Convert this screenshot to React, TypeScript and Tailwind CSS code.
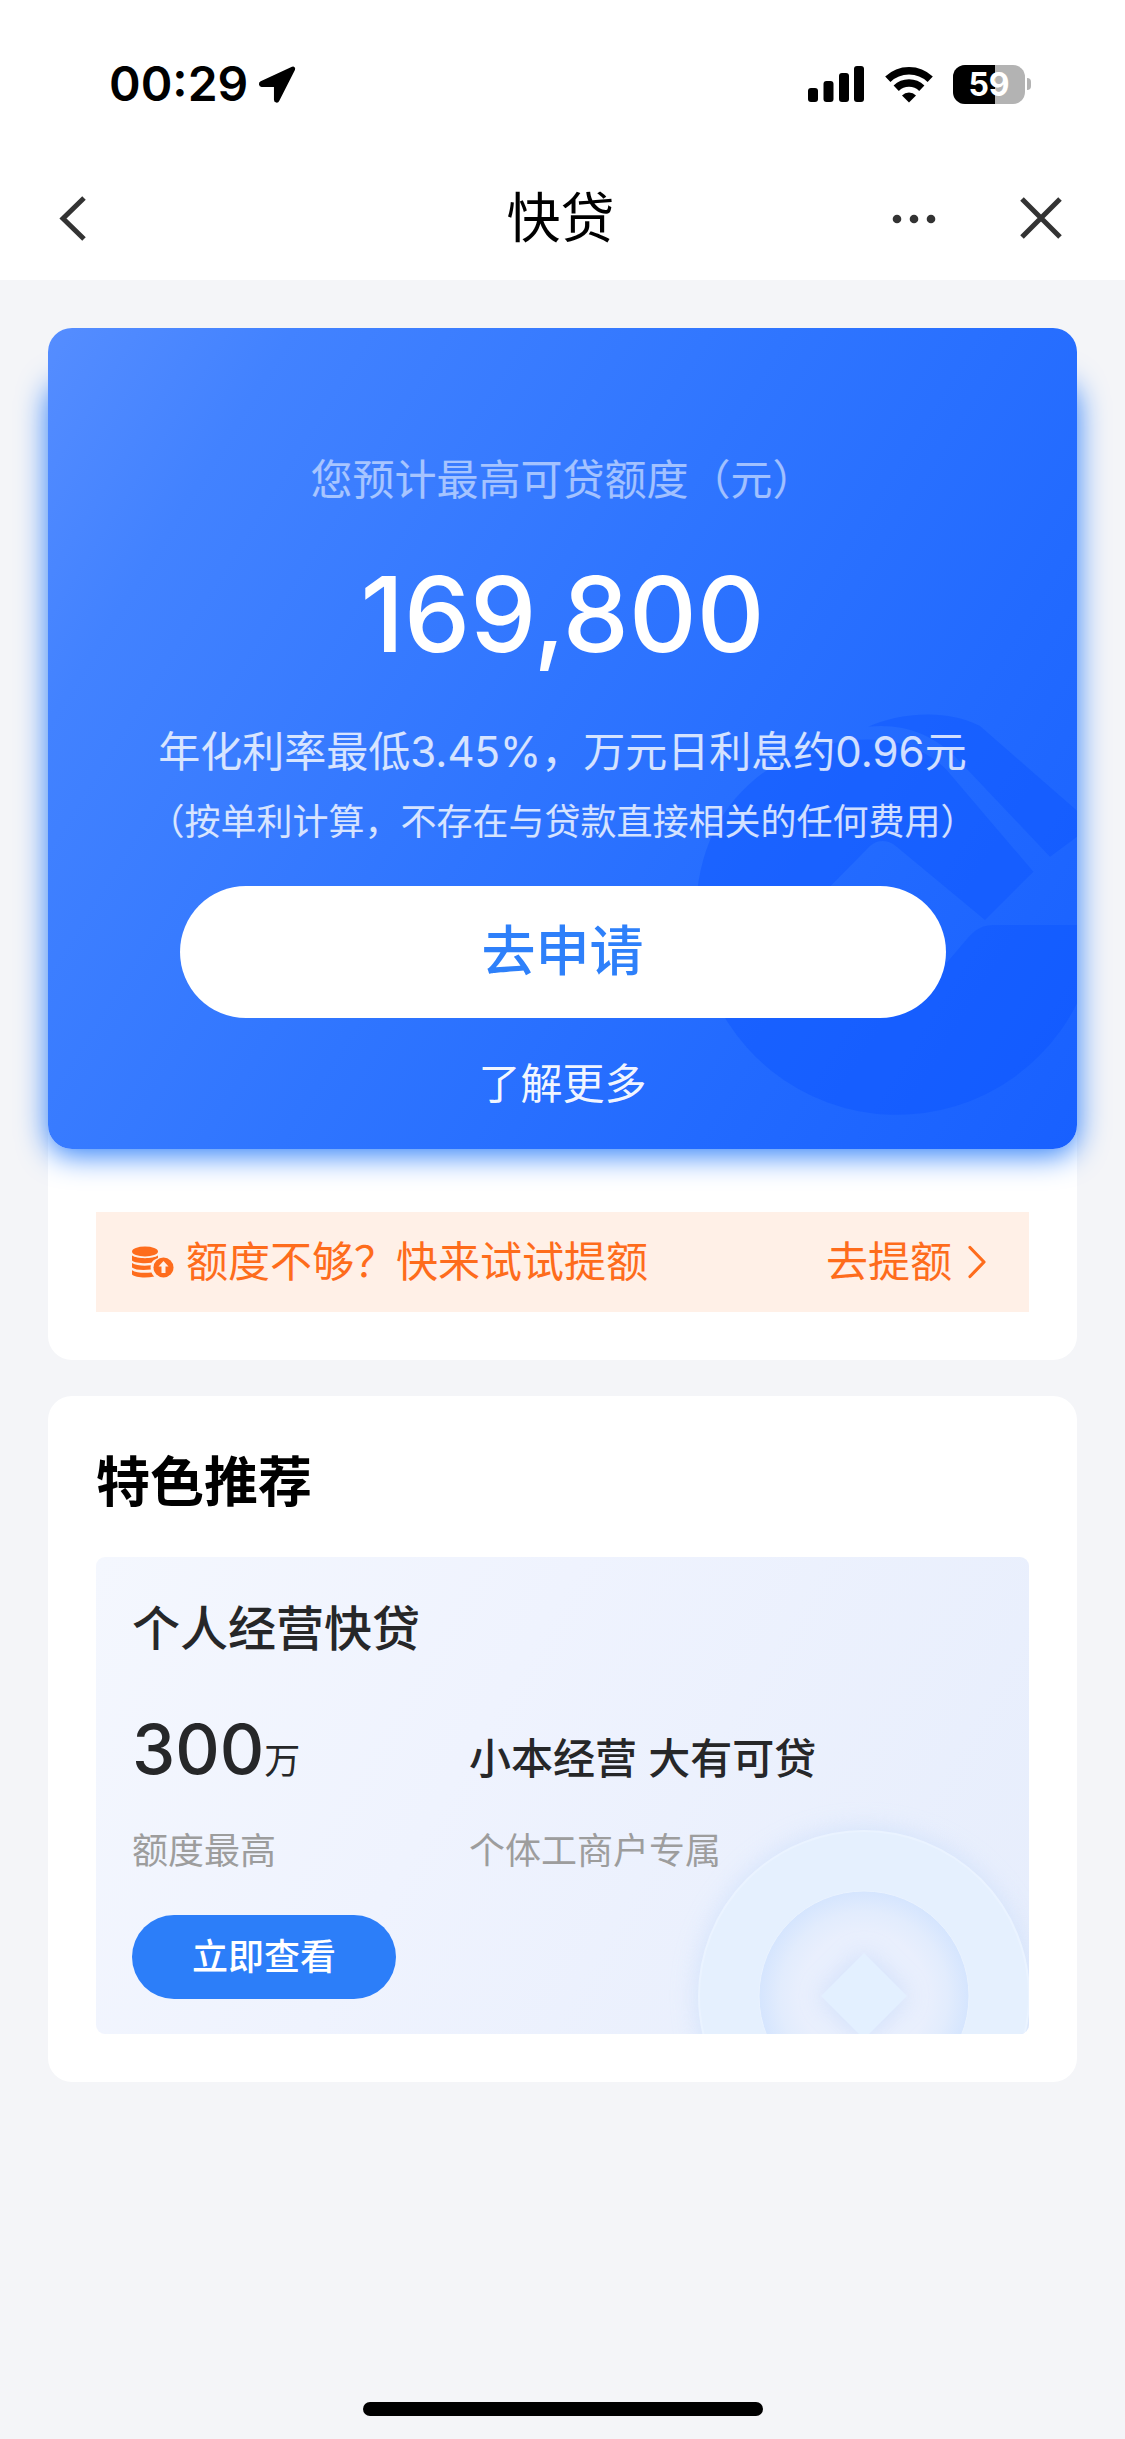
import type { ReactNode } from "react";

function LocationArrow() {
  return (
    <svg viewBox="0 0 38 38" className="h-[38px] w-[38px]" aria-hidden="true">
      <path
        d="M34.500 3 3.200 17.400c-1.600.8-1.200 3.400.4 3.400h13.600v14c0 1.800 2.200 2.200 3 .4L35.800 4.400c.4-1-.3-1.800-1.300-1.400z"
        fill="#000"
        stroke="#000"
        strokeWidth="2.500"
        strokeLinejoin="round"
      />
    </svg>
  );
}

function SignalBars() {
  return (
    <svg viewBox="0 0 57 38" className="h-[38px] w-[57px]" aria-hidden="true">
      <rect x="0" y="23" width="10" height="14" rx="3" />
      <rect x="15.500" y="16" width="10" height="21" rx="3" />
      <rect x="31" y="8" width="10" height="29" rx="3" />
      <rect x="46" y="1" width="10" height="36" rx="3" />
    </svg>
  );
}

function WifiIcon() {
  return (
    <svg viewBox="0 0 48 38" className="h-[38px] w-12" aria-hidden="true">
      <g fill="none" stroke="#000" strokeWidth="7.500">
        <path d="M2.800 14.300a30.500 30.500 0 0 1 42.400 0" />
        <path d="M11.200 23.200a18.400 18.400 0 0 1 25.600 0" />
      </g>
      <path d="M24 37.500l-7-7.100a10 10 0 0 1 14 0z" />
    </svg>
  );
}

function Battery({ level }: { level: number }) {
  return (
    <div className="flex items-center gap-[2px]">
      <div className="relative flex h-[39px] w-[72px] items-center justify-center overflow-hidden rounded-[12px] bg-[#b3b3b3]">
        <div className="absolute inset-y-0 left-0 bg-black" style={{ width: `${level}%` }} />
        <span className="relative text-[32px] leading-[39px] font-bold text-white">{level}</span>
      </div>
      <div className="h-3 w-1 rounded-r-full bg-[#b3b3b3]" />
    </div>
  );
}

function StatusBar() {
  return (
    <div className="flex items-center justify-between pt-[54px] pr-[94px] pl-[109px]">
      <div className="flex items-center gap-[10px]">
        <span className="text-[48px] leading-[60px] font-semibold text-black">00:29</span>
        <LocationArrow />
      </div>
      <div className="flex items-center gap-5">
        <SignalBars />
        <WifiIcon />
        <Battery level={59} />
      </div>
    </div>
  );
}

function NavBar() {
  return (
    <nav className="grid h-[126px] grid-cols-[1fr_auto_1fr] items-center pt-1 pr-[62px] pl-[58px]">
      <button type="button" aria-label="返回" className="justify-self-start">
        <svg viewBox="0 0 30 48" className="h-12 w-[30px]" aria-hidden="true">
          <path d="M26 3 5 23.500 26 44" fill="none" stroke="#333" strokeWidth="5" />
        </svg>
      </button>
      <h1 className="text-[54px] leading-[72px] text-black">快贷</h1>
      <div className="flex items-center gap-[82px] justify-self-end">
        <button type="button" aria-label="更多">
          <svg viewBox="0 0 46 12" className="h-3 w-[46px]" fill="#333" aria-hidden="true">
            <circle cx="6" cy="6" r="4.300" />
            <circle cx="23" cy="6" r="4.300" />
            <circle cx="40" cy="6" r="4.300" />
          </svg>
        </button>
        <button type="button" aria-label="关闭">
          <svg viewBox="0 0 44 44" className="h-11 w-11" aria-hidden="true">
            <path d="M3 2 41 40M41 2 3 40" fill="none" stroke="#333" strokeWidth="5" />
          </svg>
        </button>
      </div>
    </nav>
  );
}

// Large bank emblem in the lower right corner of the quota card
function Emblem() {
  return (
    <svg
      viewBox="0 0 1251 1377"
      className="absolute right-0 bottom-0 h-[459px] w-[417px]"
      fill="#0a52ff"
      fillOpacity="0.4"
      aria-hidden="true"
    >
      <path d="M625 110C700 75 850 50 960 108L1251 362V440L1170 500 900 215C820 130 730 100 625 110Z" />
      <path d="M860 240 1120 545 975 690 710 470C680 445 650 450 630 468L480 620C440 680 460 740 520 790L640 880C720 930 800 890 850 830L910 760C935 730 955 705 1000 705H1251V940A603 603 0 0 1 110 720C90 420 260 210 520 160 660 130 780 160 860 240Z" />
    </svg>
  );
}

function QuotaCard() {
  return (
    <div className="relative">
      <div className="absolute inset-x-0 top-12 bottom-0 rounded-[24px] shadow-[0_6px_30px_#2c7ef9]" />
      <div className="relative flex flex-col items-center overflow-hidden rounded-[24px] bg-[linear-gradient(122deg,#558dff_0%,#4282ff_16%,#2f75ff_48%,#226aff_75%,#1860ff_100%)] pt-[122px] pb-[35px] text-center text-white">
        <Emblem />
        <p className="relative text-[42px] leading-[60px] text-white/55">您预计最高可贷额度（元）</p>
        <p className="relative mt-11 text-[105px] leading-[120px] font-medium">169,800</p>
        <p className="relative mt-12 text-[42px] leading-[60px] text-white/80">
          年化利率最低3.45%，万元日利息约0.96元
        </p>
        <p className="relative mt-4 text-[36px] leading-[48px] text-white/80">
          （按单利计算，不存在与贷款直接相关的任何费用）
        </p>
        <button
          type="button"
          className="relative mt-10 h-[132px] w-[766px] rounded-full bg-white text-[54px] leading-[72px] font-medium text-[#2e80fa]"
        >
          去申请
        </button>
        <a href="#more" className="relative mt-9 text-[42px] leading-[60px] text-white/95">
          了解更多
        </a>
      </div>
    </div>
  );
}

function CoinsIcon() {
  return (
    <svg viewBox="0 0 42 32" className="h-8 w-[42px]" fill="#fe6c1c" aria-hidden="true">
      <ellipse cx="13" cy="5.500" rx="13" ry="5" />
      <path d="M0 9.500c5 3.500 21 3.500 26 0v2.500c-4 1.500-5.500 3-6.500 4.800C12 17.800 3 17 0 14.500z" />
      <path d="M0 17c4 2.600 12 3.200 18.800 2.300-.3 1.600-.3 2.900 0 4.200C11 24.500 3 24 0 21.500z" />
      <path d="M0 24.200c4 2.600 12 3.200 19.500 2.200.7 1.700 1.600 2.900 2.800 4C14 32.500 3 31.500 0 28.500z" />
      <circle cx="31.500" cy="21.500" r="10" />
      <path d="m31.500 15 5 5.500h-3V27h-4v-6.500h-3z" fill="#fff0e7" />
    </svg>
  );
}

function RaiseBanner() {
  return (
    <a
      href="#raise"
      className="mx-12 mt-[63px] flex h-[100px] items-center justify-between bg-[#fff0e7] pr-[43px] pl-9 text-[42px] leading-[60px] text-[#fe6c1c]"
    >
      <span className="flex items-center gap-3">
        <CoinsIcon />
        额度不够？快来试试提额
      </span>
      <span className="flex items-center gap-4">
        去提额
        <svg viewBox="0 0 18 34" className="h-[34px] w-[18px]" aria-hidden="true">
          <path
            d="M2 2.500 16 17 2 31.500"
            fill="none"
            stroke="#fe6c1c"
            strokeWidth="3.200"
            strokeLinecap="round"
            strokeLinejoin="round"
          />
        </svg>
      </span>
    </a>
  );
}

function CoinArt() {
  return (
    <svg
      viewBox="0 0 380 240"
      className="absolute right-0 bottom-0 h-[240px] w-[380px]"
      aria-hidden="true"
    >
      <defs>
        <filter id="soft" x="-30%" y="-30%" width="160%" height="160%">
          <feGaussianBlur stdDeviation="12" />
        </filter>
        <radialGradient id="well">
          <stop offset="0.600" stopColor="#e9effd" />
          <stop offset="0.800" stopColor="#e2ecfd" />
          <stop offset="1" stopColor="#d5e5fe" />
        </radialGradient>
      </defs>
      <circle cx="215" cy="202" r="168" fill="#cfe0fb" opacity="0.800" filter="url(#soft)" />
      <circle cx="215" cy="202" r="165" fill="#e5f0fe" stroke="#eaf3ff" strokeWidth="2" />
      <circle cx="215" cy="202" r="105" fill="url(#well)" stroke="#eaf3ff" strokeWidth="1" />
      <path d="M215 158l44 44-44 44-44-44z" fill="#c9dcfa" opacity="0.800" filter="url(#soft)" />
      <path d="M215 159l43 43-43 43-43-43z" fill="#e3f0ff" />
    </svg>
  );
}

function Card({ children }: { children: ReactNode }) {
  return <section className="rounded-[24px] bg-white pb-12">{children}</section>;
}

export default function App() {
  return (
    <div className="flex min-h-screen flex-col bg-[#f4f5f8] font-[Inter,'Noto_Sans_CJK_SC',sans-serif]">
      <header className="bg-white">
        <StatusBar />
        <div className="pt-10">
          <NavBar />
        </div>
      </header>

      <main className="flex flex-col gap-9 px-12 pt-12">
        <Card>
          <QuotaCard />
          <RaiseBanner />
        </Card>

        <Card>
          <h2 className="px-12 pt-[51px] text-[54px] leading-[72px] font-bold text-black">特色推荐</h2>
          <div className="relative mx-12 mt-[38px] overflow-hidden rounded-[9px] bg-[linear-gradient(120deg,#f4f7fe_0%,#eff3fe_40%,#e6edfc_100%)] px-9 pt-[42px] pb-[35px]">
            <CoinArt />
            <div className="relative">
              <h3 className="text-[48px] leading-[60px] font-medium text-[#262729]">个人经营快贷</h3>
              <div className="mt-[54px] grid grid-cols-[337px_1fr] items-baseline">
                <p className="text-[36px] leading-[72px] text-[#262729]">
                  <span className="text-[69px] font-medium">300</span>万
                </p>
                <p className="text-[42px] leading-[72px] font-medium text-[#262729]">
                  小本经营 大有可贷
                </p>
              </div>
              <div className="mt-[30px] grid grid-cols-[337px_1fr] text-[36px] leading-[48px] text-[#9d9d9d]">
                <p>额度最高</p>
                <p>个体工商户专属</p>
              </div>
              <button
                type="button"
                className="mt-10 h-[84px] w-[264px] rounded-full bg-[#2c7ef9] text-[36px] leading-[48px] font-medium text-white"
              >
                立即查看
              </button>
            </div>
          </div>
        </Card>
      </main>

      <div className="mt-auto flex justify-center pt-12 pb-[23px]">
        <div className="h-[14px] w-[400px] rounded-full bg-black" />
      </div>
    </div>
  );
}
